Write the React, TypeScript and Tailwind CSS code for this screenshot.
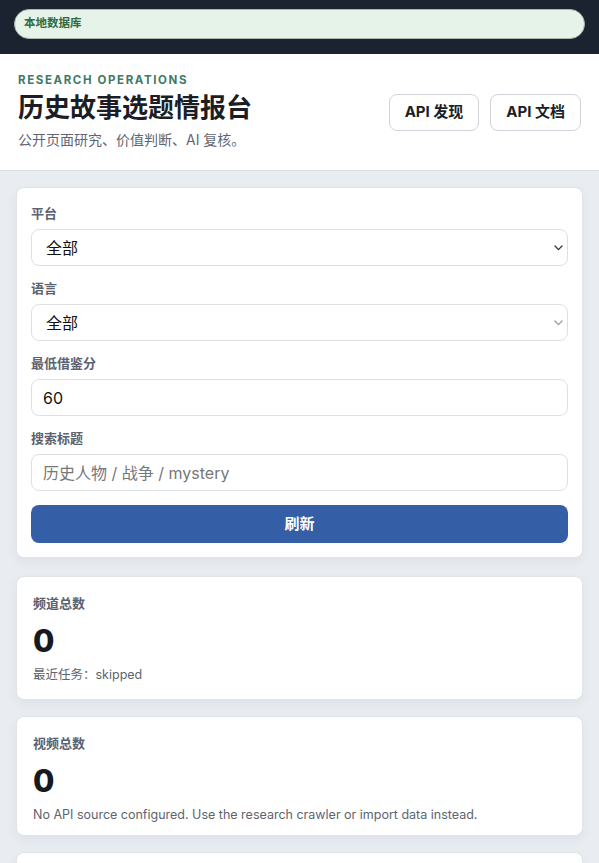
import React from "react";

const font = { fontFamily: 'Inter, "Noto Sans CJK SC", sans-serif' };

function Chevron({ color }: { color: string }) {
  return (
    <svg className="pointer-events-none absolute right-[5px] top-1/2 -translate-y-1/2" width="9" height="6" viewBox="0 0 9 6" fill="none">
      <path d="M1 1 L4.5 4.6 L8 1" stroke={color} strokeWidth="1.3" strokeLinecap="round" strokeLinejoin="round" />
    </svg>
  );
}

function SelectField({ label, chevron }: { label: string; chevron: string }) {
  return (
    <div className="flex flex-col gap-[8px]">
      <div className="text-[13px] font-semibold text-[#5b6270] leading-[16px]">{label}</div>
      <div className="relative">
        <select className="w-full h-[37px] appearance-none rounded-[8px] border border-[#dcdfe4] bg-white pl-[14px] text-[16px] text-[#111] outline-none" defaultValue="all">
          <option value="all">全部</option>
        </select>
        <Chevron color={chevron} />
      </div>
    </div>
  );
}

function InputField({ label, value, placeholder }: { label: string; value?: string; placeholder?: string }) {
  return (
    <div className="flex flex-col gap-[8px]">
      <div className="text-[13px] font-semibold text-[#5b6270] leading-[16px]">{label}</div>
      <input
        className="w-full h-[37px] rounded-[8px] border border-[#dcdfe4] bg-white px-[11px] text-[16px] text-[#111] placeholder:text-[#777] outline-none"
        defaultValue={value}
        placeholder={placeholder}
      />
    </div>
  );
}

function StatCard({ label, value, note, pb }: { label: string; value: string; note: string; pb: string }) {
  return (
    <div className={"rounded-[8px] bg-white border border-[#e1e5ea] shadow-[0_4px_12px_rgba(15,23,42,0.05)] px-[16px] pt-[18px] " + pb}>
      <div className="text-[13px] font-semibold text-[#5b6270] leading-[16px]">{label}</div>
      <div className="mt-[11px] text-[31px] font-extrabold text-[#151922] leading-[38px]">{value}</div>
      <div className="mt-[6px] text-[12.5px] text-[#5d6470] leading-[18px]">{note}</div>
    </div>
  );
}

export default function App() {
  return (
    <div className="min-h-[863px] bg-[#e9edf2]" style={font}>
      <div className="bg-[#1b2331] px-[14px] pt-[9px] pb-[15px]">
        <div className="h-[30px] rounded-full bg-[#e6f3e9] border border-[#a9b4ad] flex items-center pl-[9px] text-[11.5px] font-bold text-[#2f6b46]">
          本地数据库
        </div>
      </div>
      <div className="bg-white border-b border-[#d9dde3] px-[18px] pt-[19px] pb-[21px] flex items-start justify-between">
        <div>
          <div className="text-[11.5px] font-bold tracking-[0.14em] text-[#3e7a67] leading-[15px]">RESEARCH OPERATIONS</div>
          <div className="mt-[3px] text-[26px] font-bold text-[#1b1e25] leading-[34px]">历史故事选题情报台</div>
          <div className="mt-[6px] text-[14px] text-[#5f6673] leading-[18px]">公开页面研究、价值判断、AI 复核。</div>
        </div>
        <div className="flex gap-[11px] mt-[21px]">
          <button className="h-[37px] px-[15px] rounded-[8px] border border-[#cfd4db] bg-white text-[15px] font-bold text-[#1b1e25]">API 发现</button>
          <button className="h-[37px] px-[15px] rounded-[8px] border border-[#cfd4db] bg-white text-[15px] font-bold text-[#1b1e25]">API 文档</button>
        </div>
      </div>
      <div className="px-[16px] pt-[16px] flex flex-col">
        <div className="rounded-[8px] bg-white border border-[#e1e5ea] shadow-[0_4px_12px_rgba(15,23,42,0.05)] p-[14px] pt-[17px] flex flex-col gap-[14px]">
          <SelectField label="平台" chevron="#333" />
          <SelectField label="语言" chevron="#999" />
          <InputField label="最低借鉴分" value="60" />
          <InputField label="搜索标题" placeholder="历史人物 / 战争 / mystery" />
          <button className="h-[38px] rounded-[8px] bg-[#345ea6] text-white text-[15px] font-bold">刷新</button>
        </div>
        <div className="mt-[18px] flex flex-col gap-[16px]">
          <StatCard label="频道总数" value="0" note="最近任务：skipped" pb="pb-[15px]" />
          <StatCard label="视频总数" value="0" note="No API source configured. Use the research crawler or import data instead." pb="pb-[11px]" />
          <StatCard label="候选总数" value="0" note="" pb="pb-[16px]" />
        </div>
      </div>
    </div>
  );
}
